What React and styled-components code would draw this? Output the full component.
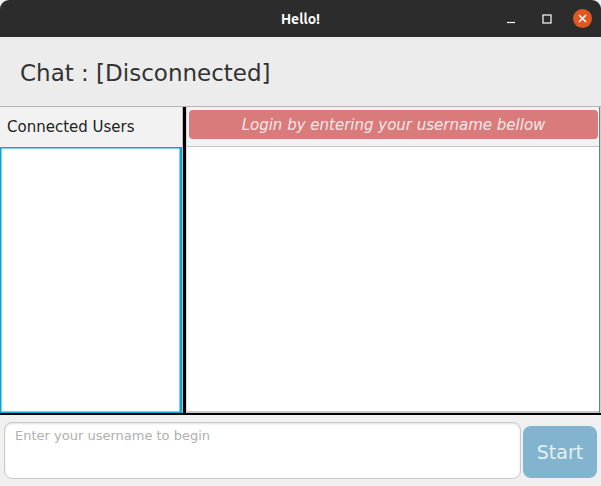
import React from 'react';
import styled, { createGlobalStyle } from 'styled-components';

const GlobalStyle = createGlobalStyle`
  html, body {
    margin: 0;
    padding: 0;
    background: #ffffff;
  }
  * {
    box-sizing: border-box;
  }
`;

const Window = styled.div`
  width: 601px;
  height: 486px;
  display: flex;
  flex-direction: column;
  font-family: "DejaVu Sans", "Liberation Sans", sans-serif;
  background: #f0f0f0;
  overflow: hidden;
`;

const TitleBar = styled.div`
  height: 37px;
  flex-shrink: 0;
  background: #2c2c2c;
  border-radius: 9px 9px 0 0;
  display: flex;
  align-items: center;
  position: relative;
  padding-right: 9px;
`;

const WindowTitle = styled.div`
  position: absolute;
  left: 0;
  right: 0;
  text-align: center;
  color: #ffffff;
  font-family: Ubuntu, "DejaVu Sans", sans-serif;
  font-weight: bold;
  font-size: 14px;
  pointer-events: none;
`;

const Controls = styled.div`
  margin-left: auto;
  display: flex;
  align-items: center;
  gap: 17px;
`;

const ControlButton = styled.div`
  width: 19px;
  height: 19px;
  display: flex;
  align-items: center;
  justify-content: center;
  border-radius: 50%;
  background: ${(p) => (p.$close ? '#e2561f' : 'transparent')};
`;

const Header = styled.div`
  height: 70px;
  flex-shrink: 0;
  background: #ececec;
  border-bottom: 1px solid #b4b4b4;
  display: flex;
  align-items: center;
  padding: 2px 0 0 20px;
  font-size: 23px;
  color: #333333;
`;

const Split = styled.div`
  flex: 1;
  display: flex;
  min-height: 0;
  background: #f2f2f2;
`;

const LeftPane = styled.div`
  width: 182px;
  display: flex;
  flex-direction: column;
`;

const PaneHeader = styled.div`
  height: 40px;
  flex-shrink: 0;
  display: flex;
  align-items: center;
  padding-left: 7px;
  font-size: 15px;
  color: #222222;
  background: #f2f2f2;
`;

const UserList = styled.div`
  flex: 1;
  background: #ffffff;
  border: 1px solid #0aa3dc;
  border-right-width: 2px;
  box-shadow: inset 0 0 0 0.5px #0aa3dc;
`;

const Divider = styled.div`
  width: 5px;
  flex-shrink: 0;
  background: #000000;
  border-left: 1px solid #bdbdbd;
  border-right: 1px solid #d8d8d8;
`;

const RightPane = styled.div`
  flex: 1;
  display: flex;
  flex-direction: column;
  border-right: 1px solid #7a7a7a;
  box-shadow: 1px 0 0 #cfcfcf;
  margin-right: 1px;
`;

const BannerRow = styled.div`
  height: 40px;
  flex-shrink: 0;
  padding: 3px 1px 7px 2px;
  border-bottom: 1px solid #c6c6c6;
`;

const Banner = styled.div`
  height: 100%;
  border-radius: 4px;
  background: #d97b7b;
  color: #f6e8e8;
  font-style: italic;
  font-size: 15px;
  display: flex;
  align-items: center;
  justify-content: center;
`;

const MessageList = styled.div`
  flex: 1;
  background: #ffffff;
  border-bottom: 2px solid #c8c8c8;
`;

const Footer = styled.div`
  height: 73px;
  flex-shrink: 0;
  border-top: 2px solid #000000;
  background: #f0f0f0;
  display: flex;
  align-items: center;
  padding: 6px 4px 6px 4px;
  gap: 2px;
`;

const InputBox = styled.textarea`
  flex: 1;
  height: 57px;
  resize: none;
  border: 1px solid #c9c9c9;
  border-radius: 8px;
  background: #ffffff;
  box-shadow: inset 0 1px 2px rgba(0, 0, 0, 0.12);
  padding: 5px 10px;
  font-family: "DejaVu Sans", "Liberation Sans", sans-serif;
  font-size: 13px;
  outline: none;
  &::placeholder {
    color: #b0b0b0;
  }
`;

const StartButton = styled.button`
  width: 74px;
  height: 52px;
  margin-top: 2px;
  border: none;
  border-radius: 8px;
  background: #82b4cf;
  color: #e6f0f5;
  font-family: "DejaVu Sans", "Liberation Sans", sans-serif;
  font-size: 19px;
`;

export default function App() {
  return (
    <>
      <GlobalStyle />
      <Window>
        <TitleBar>
          <WindowTitle>Hello!</WindowTitle>
          <Controls>
            <ControlButton>
              <svg width="10" height="10" viewBox="0 0 10 10">
                <line x1="1" y1="8.5" x2="9" y2="8.5" stroke="#ffffff" strokeWidth="1.2" />
              </svg>
            </ControlButton>
            <ControlButton>
              <svg width="10" height="10" viewBox="0 0 10 10">
                <rect x="1" y="1" width="8" height="8" fill="none" stroke="#ffffff" strokeWidth="1.2" />
              </svg>
            </ControlButton>
            <ControlButton $close>
              <svg width="11" height="11" viewBox="0 0 10 10">
                <path d="M1.8 1.8 L8.2 8.2 M8.2 1.8 L1.8 8.2" stroke="#ffffff" strokeWidth="1.4" />
              </svg>
            </ControlButton>
          </Controls>
        </TitleBar>
        <Header>Chat : [Disconnected]</Header>
        <Split>
          <LeftPane>
            <PaneHeader>Connected Users</PaneHeader>
            <UserList />
          </LeftPane>
          <Divider />
          <RightPane>
            <BannerRow>
              <Banner>Login by entering your username bellow</Banner>
            </BannerRow>
            <MessageList />
          </RightPane>
        </Split>
        <Footer>
          <InputBox placeholder="Enter your username to begin" />
          <StartButton>Start</StartButton>
        </Footer>
      </Window>
    </>
  );
}
